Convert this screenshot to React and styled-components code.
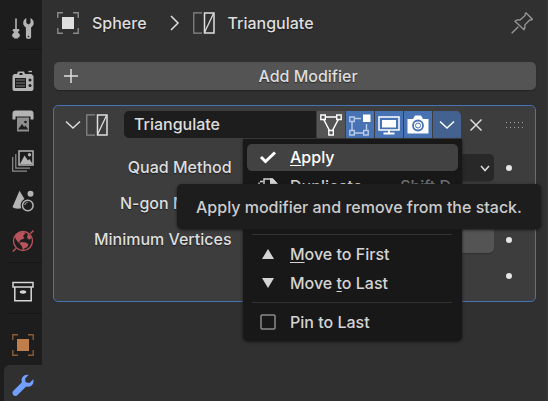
import React from "react";
import styled, { createGlobalStyle, css } from "styled-components";

const GlobalStyle = createGlobalStyle`
  * { box-sizing: border-box; }
  html, body { margin: 0; background: #303030; }
  body, button, input, select {
    font-family: Inter, "Noto Sans", sans-serif;
    font-size: 16px;
    font-weight: 500;
    line-height: 20px;
    color: #dedede;
  }
  button { border: 0; padding: 0; margin: 0; background: none; }
  svg { display: block; flex: none; overflow: visible; }
`;

const Editor = styled.div`
  display: flex;
  min-height: 100vh;
  overflow: hidden;
`;

const Sidebar = styled.nav`
  flex: none;
  width: 42px;
  padding: 8px 0 0 4px;
  background: #1d1d1d;
  display: flex;
  flex-direction: column;
`;

const Tab = styled.button`
  width: 38px;
  height: 40px;
  display: flex;
  align-items: center;
  justify-content: center;
  border-radius: 6px 0 0 6px;
  color: ${(p) => p.$color || "#b4b4b4"};
  ${(p) => p.$active && css`background: #303030;`}
`;

const TabDivider = styled.hr`
  width: 35px;
  height: 1px;
  margin: 1px 0 ${(p) => p.$gap || 11}px 3px;
  border: 0;
  background: #151515;
`;

const Main = styled.main`
  flex: 1;
  min-width: 0;
  padding: 8px 11px 0;
  border-right: 1px solid #3a3a3a;
`;

const Breadcrumb = styled.header`
  display: flex;
  align-items: center;
  height: 30px;
  padding: 0 3px 0 4px;
  text-shadow: 0 1px 1px #1a1a1a;
`;

const Crumb = styled.span`
  display: flex;
  align-items: center;
  gap: 13px;
`;

const Chevron = styled.span`
  margin: 0 12px 0 20px;
`;

const PinButton = styled.button`
  margin-left: auto;
  color: #9a9a9a;
`;

const AddButton = styled.button`
  display: grid;
  grid-template-columns: 20px 1fr 20px;
  align-items: center;
  width: calc(100% - 1px);
  height: 28px;
  margin: 24px 0 15px 1px;
  padding: 0 7px;
  border-radius: 5px;
  background: #545454;
  box-shadow: 0 1px 1px #242424;
  text-shadow: 0 1px 1px #2a2a2a;
`;

const AddLabel = styled.span`
  padding-left: 26px;
`;

const Panel = styled.section`
  border: 1px solid #4772b3;
  border-radius: 5px;
  background: #3d3d3d;
  padding: 5px 0 12px;
`;

const PanelHeader = styled.div`
  display: flex;
  align-items: center;
  height: 27px;
  padding: 0 12px 0 10px;
`;

const PlainButton = styled.button`
  display: flex;
  align-items: center;
  justify-content: center;
  flex: none;
  width: ${(p) => p.$width || 18}px;
  height: 27px;
`;

const NameField = styled.input`
  flex: 1;
  min-width: 0;
  height: 27px;
  margin: 0 1px 0 12px;
  padding: 0 10px 2px;
  border: 0;
  border-radius: 5px 0 0 5px;
  background: #1d1d1d;
`;

const ModeGroup = styled.div`
  position: relative;
  display: flex;
  gap: 1px;
`;

const Mode = styled.button`
  display: flex;
  align-items: center;
  justify-content: center;
  width: 28px;
  height: 27px;
  color: #ffffff;
  background: ${(p) => p.$bg || "#4772b3"};
  &:last-of-type { border-radius: 0 5px 0 0; }
`;

const Grip = styled.span`
  display: grid;
  grid-template-columns: repeat(5, 1px);
  gap: 4px 3px;
  margin-left: 15px;
`;

const GripDot = styled.i`
  width: 1px;
  height: 1px;
  background: #a0a0a0;
`;

const Properties = styled.div`
  display: grid;
  gap: 9px;
  margin-top: 16px;
`;

const Property = styled.div`
  display: grid;
  grid-template-columns: 3fr 4fr 30px;
  align-items: center;
  height: 27px;
  padding-right: 11px;
  text-shadow: 0 1px 1px #1f1f1f;
`;

const PropertyLabel = styled.label`
  padding: 0 11px 2px 0;
  text-align: right;
  white-space: nowrap;
`;

const SelectBox = styled.div`
  display: grid;
  grid-template-columns: 1fr 14px;
  align-items: center;
  height: 27px;
  border-radius: 5px;
  background: #282828;
  box-shadow: 0 1px 1px #303030;
`;

const Select = styled.select`
  appearance: none;
  min-width: 0;
  height: 27px;
  padding: 0 8px;
  border: 0;
  background: transparent;
`;

const NumberField = styled.input`
  width: 100%;
  height: 27px;
  border: 0;
  border-radius: 5px;
  background: #545454;
  text-align: center;
  box-shadow: 0 1px 1px #303030;
`;

const AnimateDot = styled.button`
  justify-self: center;
  grid-column: 3;
  width: 6px;
  height: 6px;
  border-radius: 50%;
  background: #e6e6e6;
`;

const Menu = styled.div`
  position: absolute;
  z-index: 2;
  top: 28px;
  right: -1px;
  width: 219px;
  padding: 5px 4px;
  border-radius: 0 0 5px 5px;
  background: #181818;
  box-shadow: 0 1px 3px #181818;
  display: flex;
  flex-direction: column;
  gap: 2px;
`;

const MenuItem = styled.button`
  display: grid;
  grid-template-columns: 22px 1fr auto;
  align-items: center;
  column-gap: 11px;
  height: 27px;
  padding: 0 7px 1px 10px;
  border-radius: 5px;
  text-align: left;
  color: ${(p) => (p.$active ? "#ffffff" : "#d4d4d4")};
  background: ${(p) => (p.$active ? "#424242" : "transparent")};
  u { text-underline-offset: 2px; text-decoration-skip-ink: none; }
`;

const Shortcut = styled.span`
  color: #707070;
`;

const MenuDivider = styled.hr`
  height: 1px;
  width: 200px;
  margin: ${(p) => (p.$gap ? "32px" : "3px")} 5px 4px;
  border: 0;
  background: #303030;
`;

const Tooltip = styled.div`
  position: absolute;
  z-index: 3;
  top: 45px;
  left: -66px;
  padding: 13px 19px 12px;
  border-radius: 5px;
  background: #1d1d1d;
  box-shadow: 0 1px 3px #181818;
  color: #cccccc;
  white-space: nowrap;
`;

const Icon = ({ size = 22, children }) => (
  <svg width={size} height={size} viewBox={`0 0 ${size} ${size}`} fill="none" stroke="currentColor" strokeWidth="1.5" aria-hidden="true">
    {children}
  </svg>
);

const ToolIcon = () => (
  <Icon>
    <path d="M4 1.5v10.5" strokeWidth="1.6" />
    <path d="M1.2 12h5.6l.8 1.8-2 1.2 2.2 2.2v2L5.5 21.5h-3L.2 19.2v-2L2.4 15l-2-1.2z" fill="currentColor" stroke="none" />
    <path d="M14.3 1v5l2.1 1.6L18.500 6V1c2.200 1.100 3.200 2.900 3.200 5.100 0 2-1 3.500-2.600 4.400V20c0 1.300-1.200 2-2.600 2s-2.600-.7-2.600-2v-9.500C12.200 9.600 11.200 8.100 11.200 6.100c0-2.200 1-4 3.100-5.100z" fill="currentColor" stroke="none" />
    <circle cx="16.500" cy="19.500" r=".8" fill="#1d1d1d" stroke="none" />
  </Icon>
);

const RenderIcon = () => (
  <Icon>
    <path fillRule="evenodd" d="M2 4h3l1-2.500h6L13 4h6.500L21.500 6v13c0 1-1 2-2 2h-17c-1 0-2-1-2-2V6zM7.500 3v2h3V3zM3 8v10h11V8z" fill="currentColor" stroke="none" />
    <path d="M16.500 1.500h3.500" strokeWidth="1.400" />
    <path d="M4 10h9M4 13h9M4 16h9" strokeWidth="1" opacity=".6" />
    <circle cx="18" cy="10" r="1.5" fill="#1d1d1d" stroke="none" />
    <circle cx="18" cy="15.500" r="1.5" fill="#1d1d1d" stroke="none" />
  </Icon>
);

const OutputIcon = () => (
  <Icon>
    <path d="M.5 9.500V3.500c0-2 1-3 3-3h15c2 0 3 1 3 3v6h-3V6.500h-15v3z" fill="currentColor" stroke="none" />
    <path d="M5 7.500h12v14H5z" fill="#8e8e8e" stroke="none" />
    <path d="M6 19.500l4-5.500 2.200 3 1.200-1.500 2.800 4z" fill="#1d1d1d" stroke="none" />
    <circle cx="13.500" cy="12" r="1.3" fill="#1d1d1d" stroke="none" />
  </Icon>
);

const ViewLayerIcon = () => (
  <Icon>
    <path d="M7 1h14v14H7z" />
    <path d="M8 14l4.500-8.500 3.500 5 1.500-1.500 3 5z" fill="currentColor" stroke="none" />
    <circle cx="17.500" cy="4.800" r="1.700" fill="currentColor" stroke="none" />
    <path d="M3.800 4v14.200H18M.7 7v14.200H15" strokeWidth="1.2" opacity=".75" />
  </Icon>
);

const SceneIcon = () => (
  <Icon>
    <path d="M7.500.8L12.500 9c-3.500 2-4.500 5.500-3.200 9.300-3.800.8-7.300.2-8.800-1.300z" fill="currentColor" stroke="none" />
    <circle cx="18.500" cy="3.700" r="3" fill="currentColor" stroke="none" />
    <circle cx="15.800" cy="15.500" r="5.300" strokeWidth="1.500" />
    <path d="M12.800 15c.2-1.500 1.200-2.400 2.700-2.600" strokeWidth="1" />
  </Icon>
);

const WorldIcon = () => (
  <Icon>
    <circle cx="11" cy="11" r="9.500" strokeWidth="1.300" />
    <path d="M.8 21.500l3-3M18.500 3.500l3-3" strokeWidth="1.500" />
    <path d="M3 6.500C5 3.200 8 1.800 11.500 2l2 1.500-1.500 1.200-1 1.800 1.500 1-1.500 1.700-2 .3-1.500 2 .5 1.500-2-1-2.500-3.300zM16 3l3.500 5-2.500 1.800-2-2 .5-2zM9 12l5 .5 2.500 2-1.500 2.800-2.800 1.200L11 20.300 9.800 16 7.500 13.800z" fill="currentColor" stroke="none" />
  </Icon>
);

const CollectionIcon = () => (
  <Icon>
    <path d="M1 1.500h20V6H1zM2.800 6v13.800h16.400V6" />
    <ellipse cx="11" cy="11" rx="3.200" ry="1.700" fill="currentColor" stroke="none" />
  </Icon>
);

const ObjectIcon = ({ corner = "#8b8b8b" }) => (
  <Icon>
    <path d="M5 5h12v12H5z" fill="currentColor" stroke="none" />
    <path d="M.8 6V.8H6M16 .8h5.200V6M21.200 16v5.200H16M6 21.200H.8V16" stroke={corner} strokeWidth="1.400" />
  </Icon>
);

const WrenchIcon = () => (
  <Icon>
    <path d="M16.700.8l-3.600 3.600.5 3.900 3.900.6L21.300 5.300c.7 3.300-.3 5.500-2.300 6.700-1.600.9-3.300 1-4.800.4L5.600 21c-1.300 1.300-3.200 1.200-4.300.1s-1.200-3 .1-4.300L9.900 8.200C9.200 6.400 9.500 4.600 10.700 3 12.100 1.200 14.200.3 16.700.8z" fill="currentColor" stroke="none" />
  </Icon>
);

const TriangulateIcon = () => (
  <Icon>
    <path d="M9 .8H.8v20.400H9" stroke="#8b8b8b" strokeWidth="1.200" />
    <path d="M11.500 1h9.500v20h-9.500z" />
    <path d="M11.500 20.500L20.500 1.500" strokeWidth="1.300" />
  </Icon>
);

const PinIcon = () => (
  <Icon>
    <path d="M.7 21.300l6.600-6.600M4 9.200l9 8.500c1-1.500 1.200-3.200.9-4.800L18.700 8c1 .3 2 .1 2.600-.8L15 .8c-.9.700-1.200 1.600-.8 2.600L9 8.100C7.300 7.700 5.500 8 4 9.200z" strokeWidth="1.300" />
  </Icon>
);

const VertexIcon = () => (
  <Icon>
    <path d="M5 3h12M3.500 5l6 11.500M18.500 5l-6 11.500" />
    <path d="M.8 1h4.500v4.500H.8zM16.700 1h4.500v4.500h-4.500zM8.800 16.500h4.500V21H8.800z" strokeWidth="1.400" />
  </Icon>
);

const EditModeIcon = () => (
  <Icon>
    <g stroke="#b8cbe8" strokeWidth="1.400">
      <path d="M.8 3h4.500v4.500H.8zM.8 16.500h4.500V21H.8zM14.700 16.500h4.500V21h-4.500zM6 4.500h6M3 8v8M6 19h8M17.500 16v-6" />
    </g>
    <path d="M14 .5h7.500V8H14z" fill="currentColor" stroke="none" />
  </Icon>
);

const DisplayIcon = () => (
  <Icon>
    <path d="M1 3h20v13H1z" />
    <path d="M4 6h14v7.500H4z" fill="currentColor" stroke="none" />
    <path d="M11 16v3M5.500 19.500h11" strokeWidth="2" />
  </Icon>
);

const CameraIcon = () => (
  <Icon>
    <path d="M.5 5h5.500l2-3.500h6L16 5h5.500v14.500H.5z" fill="currentColor" stroke="none" />
    <circle cx="11" cy="11.500" r="5" stroke="#4772b3" strokeWidth="1.800" />
    <circle cx="11" cy="11.500" r="2.500" stroke="#4772b3" strokeWidth="1" />
  </Icon>
);

const DownIcon = () => <Icon size={14}><path d="M0 3.500l7 6.500 7-6.500" /></Icon>;
const SmallDownIcon = () => <Icon size={10}><path d="M1 3l4 4.500L9 3" /></Icon>;
const RightIcon = () => <Icon size={14}><path d="M4 0l7 7-7 7" /></Icon>;
const PlusIcon = () => <Icon size={20}><path d="M10 3v14M3 10h14" /></Icon>;
const CloseIcon = () => <Icon size={14}><path d="M1.500 1.500l11 11M12.500 1.500l-11 11" /></Icon>;
const CheckIcon = () => <Icon><path d="M4 11l4.500 4.500L18 6.500" strokeWidth="3" /></Icon>;
const UpTriangle = () => <Icon><path d="M5 16l6-10 6 10z" fill="currentColor" stroke="none" /></Icon>;
const DownTriangle = () => <Icon><path d="M5 6l6 10 6-10z" fill="currentColor" stroke="none" /></Icon>;
const BoxIcon = () => <Icon><rect x="4" y="4" width="14" height="14" rx="1" stroke="#8b8b8b" /></Icon>;
const DuplicateIcon = () => (
  <Icon>
    <path d="M6 6.500H2V18h8" strokeDasharray="3 2" />
    <path d="M7 16V4h8l4 4v12H7z" />
    <path d="M13 3.500h3L21 9v1h-8z" fill="currentColor" stroke="none" />
  </Icon>
);

const dots = Array.from({ length: 10 }, (_, i) => i);

export default function App() {
  return (
    <Editor>
      <GlobalStyle />
      <Sidebar aria-label="Property tabs">
        <Tab aria-label="Tool"><ToolIcon /></Tab>
        <TabDivider />
        <Tab aria-label="Render"><RenderIcon /></Tab>
        <Tab aria-label="Output"><OutputIcon /></Tab>
        <Tab aria-label="View Layer"><ViewLayerIcon /></Tab>
        <Tab aria-label="Scene"><SceneIcon /></Tab>
        <Tab aria-label="World" $color="#b9545c"><WorldIcon /></Tab>
        <TabDivider $gap={9} />
        <Tab aria-label="Collection" $color="#d8d8d8"><CollectionIcon /></Tab>
        <TabDivider />
        <Tab aria-label="Object" $color="#c07f4a"><ObjectIcon corner="#8a5c38" /></Tab>
        <Tab aria-label="Modifiers" $color="#71a0ff" $active><WrenchIcon /></Tab>
      </Sidebar>

      <Main>
        <Breadcrumb>
          <Crumb><ObjectIcon />Sphere</Crumb>
          <Chevron><RightIcon /></Chevron>
          <Crumb><TriangulateIcon />Triangulate</Crumb>
          <PinButton aria-label="Pin"><PinIcon /></PinButton>
        </Breadcrumb>

        <AddButton><PlusIcon /><AddLabel>Add Modifier</AddLabel></AddButton>

        <Panel>
          <PanelHeader>
            <PlainButton aria-label="Collapse"><DownIcon /></PlainButton>
            <PlainButton aria-label="Triangulate modifier" $width={30}><TriangulateIcon /></PlainButton>
            <NameField aria-label="Modifier name" defaultValue="Triangulate" />
            <ModeGroup>
              <Mode aria-label="On cage" $bg="#545454"><VertexIcon /></Mode>
              <Mode aria-label="Edit mode"><EditModeIcon /></Mode>
              <Mode aria-label="Realtime"><DisplayIcon /></Mode>
              <Mode aria-label="Render"><CameraIcon /></Mode>
              <Mode aria-label="Options" $bg="#446290"><DownIcon /></Mode>
              <Menu role="menu">
                <MenuItem role="menuitem" $active><CheckIcon /><span><u>A</u>pply</span></MenuItem>
                <MenuItem role="menuitem"><DuplicateIcon /><span>Duplicate</span><Shortcut>Shift D</Shortcut></MenuItem>
                <MenuDivider $gap />
                <MenuItem role="menuitem"><UpTriangle /><span><u>M</u>ove to First</span></MenuItem>
                <MenuItem role="menuitem"><DownTriangle /><span>Move <u>t</u>o Last</span></MenuItem>
                <MenuDivider />
                <MenuItem role="menuitemcheckbox" aria-checked="false"><BoxIcon /><span>Pin to Last</span></MenuItem>
                <Tooltip role="tooltip">Apply modifier and remove from the stack.</Tooltip>
              </Menu>
            </ModeGroup>
            <PlainButton aria-label="Remove" $width={30}><CloseIcon /></PlainButton>
            <Grip>{dots.map((i) => <GripDot key={i} />)}</Grip>
          </PanelHeader>

          <Properties>
            <Property>
              <PropertyLabel htmlFor="quad">Quad Method</PropertyLabel>
              <SelectBox><Select id="quad" /><SmallDownIcon /></SelectBox>
              <AnimateDot aria-label="Animate quad method" />
            </Property>
            <Property>
              <PropertyLabel htmlFor="ngon">N-gon Method</PropertyLabel>
              <SelectBox><Select id="ngon" /><SmallDownIcon /></SelectBox>
              <AnimateDot aria-label="Animate n-gon method" />
            </Property>
            <Property>
              <PropertyLabel htmlFor="minimum">Minimum Vertices</PropertyLabel>
              <NumberField id="minimum" type="text" inputMode="numeric" />
              <AnimateDot aria-label="Animate minimum vertices" />
            </Property>
            <Property>
              <AnimateDot aria-label="Animate normals" />
            </Property>
          </Properties>
        </Panel>
      </Main>
    </Editor>
  );
}
